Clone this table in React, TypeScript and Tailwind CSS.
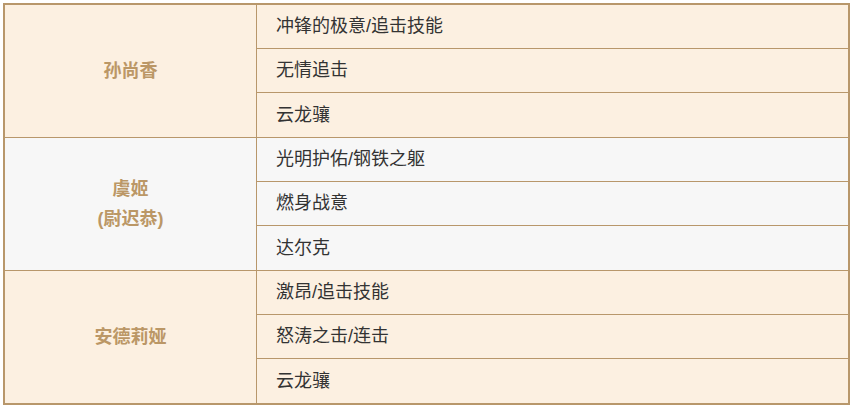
const groups = [
  { name: ["孙尚香"], bg: "bg-[#fcf0e1]", items: ["冲锋的极意/追击技能", "无情追击", "云龙骧"] },
  { name: ["虞姬", "(尉迟恭)"], bg: "bg-[#f7f7f7]", items: ["光明护佑/钢铁之躯", "燃身战意", "达尔克"] },
  { name: ["安德莉娅"], bg: "bg-[#fcf0e1]", items: ["激昂/追击技能", "怒涛之击/连击", "云龙骧"] },
];

export default function App() {
  return (
    <div className="w-[855px] h-[407px] bg-white pt-[3px] pl-[3px] font-['Liberation_Sans','Noto_Sans_CJK_SC',sans-serif]">
      <div className="w-[847px] border-2 border-[#b8976b]">
        {groups.map((g, gi) => (
          <div key={gi} className={`flex h-[132px] ${g.bg} ${gi > 0 ? "box-content border-t border-[#b8976b]" : ""}`}>
            <div className="w-[252px] shrink-0 border-r border-[#b8976b] flex flex-col items-center justify-center text-[18px] font-bold leading-[30px] text-[#bb9766]">
              {g.name.map((n) => (
                <div key={n}>{n}</div>
              ))}
            </div>
            <div className="flex-1 flex flex-col">
              {g.items.map((it, i) => (
                <div
                  key={i}
                  className={`flex items-center pl-[19px] text-[18px] text-[#333333] ${i === 0 ? "h-[43px]" : i === 1 ? "h-[44px] border-t border-[#b8976b]" : "h-[45px] border-t border-[#b8976b]"}`}
                >
                  {it}
                </div>
              ))}
            </div>
          </div>
        ))}
      </div>
    </div>
  );
}
